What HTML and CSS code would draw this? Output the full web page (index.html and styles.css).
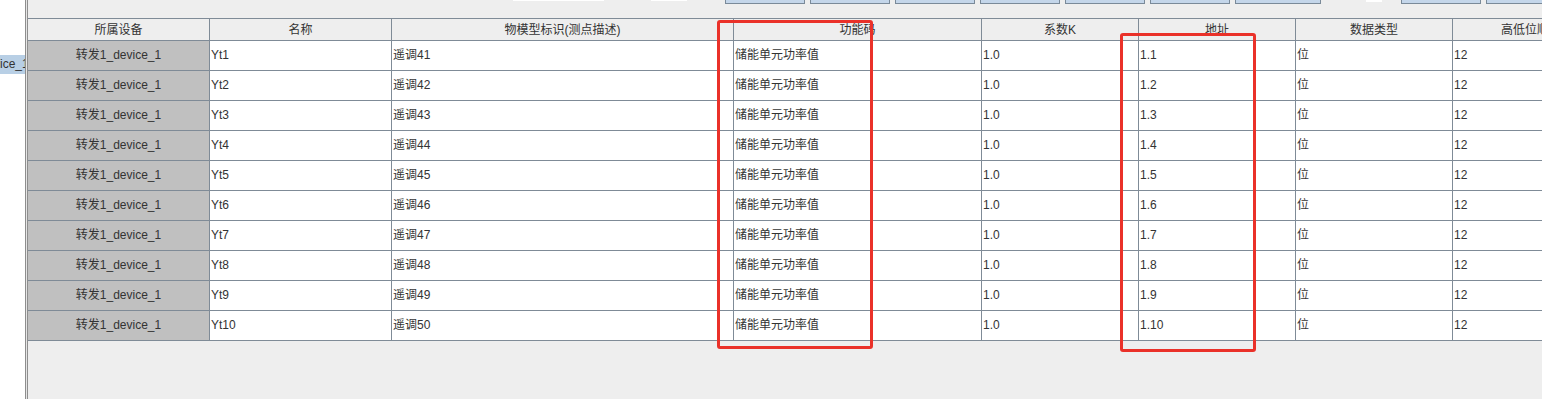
FILE: index.html
```html
<!DOCTYPE html>
<html lang="zh">
<head>
<meta charset="utf-8">
<title>点表</title>
<link rel="stylesheet" href="styles.css">
</head>
<body>
<div class="page">
  <aside class="tree">
    <div class="tree-node">ice_1</div>
  </aside>
  <div class="divider"></div>
  <main class="panel">
    <div class="toolbar">
      <div class="field f1"></div>
      <div class="field f2"></div>
      <div class="btn b-first"></div>
      <div class="btn"></div>
      <div class="btn"></div>
      <div class="btn"></div>
      <div class="btn"></div>
      <div class="btn"></div>
      <div class="btn wide"></div>
      <div class="field f3"></div>
      <div class="btn b-after"></div>
      <div class="btn"></div>
    </div>
    <div class="grid">
      <div class="th">所属设备</div>
      <div class="th">名称</div>
      <div class="th">物模型标识(测点描述)</div>
      <div class="th">功能码</div>
      <div class="th">系数K</div>
      <div class="th">地址</div>
      <div class="th">数据类型</div>
      <div class="th">高低位顺序</div>

      <div class="td dev">转发1_device_1</div><div class="td">Yt1</div><div class="td">遥调41</div><div class="td">储能单元功率值</div><div class="td">1.0</div><div class="td">1.1</div><div class="td">位</div><div class="td">12</div>
      <div class="td dev">转发1_device_1</div><div class="td">Yt2</div><div class="td">遥调42</div><div class="td">储能单元功率值</div><div class="td">1.0</div><div class="td">1.2</div><div class="td">位</div><div class="td">12</div>
      <div class="td dev">转发1_device_1</div><div class="td">Yt3</div><div class="td">遥调43</div><div class="td">储能单元功率值</div><div class="td">1.0</div><div class="td">1.3</div><div class="td">位</div><div class="td">12</div>
      <div class="td dev">转发1_device_1</div><div class="td">Yt4</div><div class="td">遥调44</div><div class="td">储能单元功率值</div><div class="td">1.0</div><div class="td">1.4</div><div class="td">位</div><div class="td">12</div>
      <div class="td dev">转发1_device_1</div><div class="td">Yt5</div><div class="td">遥调45</div><div class="td">储能单元功率值</div><div class="td">1.0</div><div class="td">1.5</div><div class="td">位</div><div class="td">12</div>
      <div class="td dev">转发1_device_1</div><div class="td">Yt6</div><div class="td">遥调46</div><div class="td">储能单元功率值</div><div class="td">1.0</div><div class="td">1.6</div><div class="td">位</div><div class="td">12</div>
      <div class="td dev">转发1_device_1</div><div class="td">Yt7</div><div class="td">遥调47</div><div class="td">储能单元功率值</div><div class="td">1.0</div><div class="td">1.7</div><div class="td">位</div><div class="td">12</div>
      <div class="td dev">转发1_device_1</div><div class="td">Yt8</div><div class="td">遥调48</div><div class="td">储能单元功率值</div><div class="td">1.0</div><div class="td">1.8</div><div class="td">位</div><div class="td">12</div>
      <div class="td dev">转发1_device_1</div><div class="td">Yt9</div><div class="td">遥调49</div><div class="td">储能单元功率值</div><div class="td">1.0</div><div class="td">1.9</div><div class="td">位</div><div class="td">12</div>
      <div class="td dev">转发1_device_1</div><div class="td">Yt10</div><div class="td">遥调50</div><div class="td">储能单元功率值</div><div class="td">1.0</div><div class="td">1.10</div><div class="td">位</div><div class="td">12</div>
    </div>
  </main>
  <div class="mark mark-func"></div>
  <div class="mark mark-addr"></div>
</div>
</body>
</html>
```
FILE: styles.css
```css
html, body {
  margin: 0;
  padding: 0;
  background: #ffffff;
}
body {
  width: 1542px;
  height: 399px;
  overflow: hidden;
  font-family: "Liberation Sans", "Noto Sans CJK SC", sans-serif;
  font-size: 12px;
  color: #333333;
}
.page {
  position: relative;
  display: flex;
  width: 1542px;
  height: 399px;
  overflow: hidden;
}
.tree {
  width: 25px;
  flex: none;
  background: #ffffff;
  overflow: hidden;
  padding-top: 55px;
  box-sizing: border-box;
}
.tree-node {
  height: 19px;
  line-height: 19px;
  background: #b8cfe5;
  color: #333333;
  white-space: nowrap;
  overflow: hidden;
  padding-left: 0;
}
.divider {
  width: 1px;
  flex: none;
  background: #e6e6e6;
  border-left: 1px solid #8e8e8e;
  border-right: 1px solid #8e8e8e;
}
.panel {
  flex: 1;
  min-width: 0;
  background: #eeeeee;
  overflow: hidden;
}
.toolbar {
  height: 18px;
  display: flex;
  align-items: flex-start;
}
.field {
  height: 1px;
  background: #ffffff;
  flex: none;
}
.f1 { margin-left: 485px; width: 91px; }
.f2 { margin-left: 47px; width: 36px; }
.f3 { margin-left: 45px; width: 16px; height: 2px; }
.btn {
  flex: none;
  width: 78px;
  height: 3px;
  margin-left: 5px;
  background: #c4d6ea;
  border: 1px solid #7a8a99;
  border-top: none;
}
.btn.b-first { margin-left: 38px; }
.btn.wide { width: 84px; }
.btn.b-after { margin-left: 19px; }
.grid {
  display: grid;
  grid-template-columns: 181px 181px 341px 247px 156px 156px 156px 156px;
  grid-template-rows: 21px repeat(10, 29px);
  gap: 1px;
  width: max-content;
  background: #7f8b97;
  border-top: 1px solid #7f8b97;
  border-bottom: 1px solid #7f8b97;
}
.th {
  background: #eeeeee;
  color: #333333;
  text-align: center;
  line-height: 22px;
  white-space: nowrap;
  overflow: hidden;
}
.td {
  background: #ffffff;
  color: #333333;
  line-height: 29px;
  padding-left: 1px;
  white-space: nowrap;
  overflow: hidden;
}
.td.dev {
  background: #c0c0c0;
  text-align: center;
  padding-left: 0;
}
.mark {
  position: absolute;
  border: 3px solid #ea3129;
  border-radius: 3px;
  box-sizing: border-box;
  pointer-events: none;
}
.mark-func {
  left: 717px;
  top: 20px;
  width: 156px;
  height: 329px;
}
.mark-addr {
  left: 1120px;
  top: 33px;
  width: 136px;
  height: 319px;
}
```
